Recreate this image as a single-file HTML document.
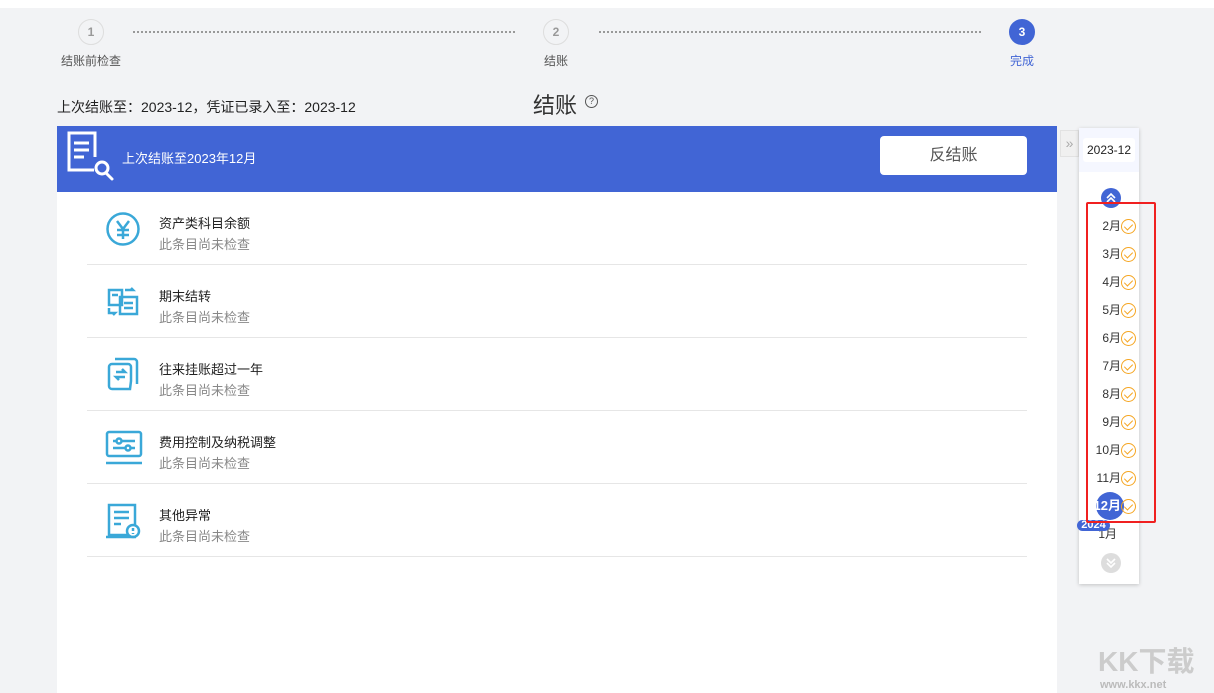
<!DOCTYPE html>
<html><head><meta charset="utf-8"><style>
*{margin:0;padding:0;box-sizing:border-box}
body{width:1214px;height:693px;background:#f2f3f5;font-family:"Liberation Sans","Noto Sans CJK SC",sans-serif;position:relative;overflow:hidden;color:#333}
.a{position:absolute}
.step{width:26px;height:26px;border-radius:50%;border:1px solid #ddd;background:#f2f3f5;color:#999;font-size:12px;font-weight:bold;text-align:center;line-height:24px}
.sl{font-size:12px;color:#555;text-align:center;width:100px}
.dash{border-top:2px dotted #999;height:0}
.row{left:87px;width:940px;height:73px;border-bottom:1px solid #e6e6e6}
.t1{position:absolute;left:72px;top:21px;font-size:13px;color:#222}
.t2{position:absolute;left:72px;top:42px;font-size:13px;color:#888}
.ic{position:absolute;left:18px;top:19px}
.m{position:absolute;right:18px;width:50px;text-align:right;font-size:12px;color:#333;line-height:16px}
.ck{position:absolute;left:1121px;width:15px;height:15px;border:1.5px solid #f5a623;border-radius:50%}
.ck:after{content:"";position:absolute;left:3.5px;top:2px;width:4px;height:7px;border:solid #f5a623;border-width:0 1.5px 1.5px 0;transform:rotate(45deg)}
</style></head><body>
<div class="a" style="left:0;top:0;width:1214px;height:8px;background:#fff"></div>
<div class="a step" style="left:78px;top:19px">1</div>
<div class="a sl" style="left:41px;top:52px">结账前检查</div>
<div class="a dash" style="left:133px;top:31px;width:382px"></div>
<div class="a step" style="left:543px;top:19px">2</div>
<div class="a sl" style="left:506px;top:52px">结账</div>
<div class="a dash" style="left:599px;top:31px;width:382px"></div>
<div class="a step" style="left:1009px;top:19px;background:#4165d5;border-color:#4165d5;color:#fff">3</div>
<div class="a sl" style="left:972px;top:52px;color:#4165d5">完成</div>
<div class="a" style="left:57px;top:97px;font-size:14px;color:#222">上次结账至：2023-12，凭证已录入至：2023-12</div>
<div class="a" style="left:533px;top:88px;font-size:22px;color:#333">结账</div>
<div class="a" style="left:585px;top:95px;width:13px;height:13px;border:1px solid #555;border-radius:50%;font-size:9px;text-align:center;line-height:11px;color:#555">?</div>
<div class="a" style="left:57px;top:126px;width:1000px;height:567px;background:#fff"></div>
<div class="a" style="left:57px;top:126px;width:1000px;height:66px;background:#4165d5"></div>
<svg class="a" style="left:64px;top:130px" width="54" height="52" viewBox="0 0 54 52" fill="none" stroke="#fff" stroke-width="3"><path d="M30 40H5V3h26v24"/><path d="M10 13h15M10 20h15M10 27h10"/><circle cx="38" cy="38" r="6"/><path d="M42 43l6 6" stroke-linecap="round"/></svg>
<div class="a" style="left:122px;top:148px;font-size:13px;color:#fff">上次结账至2023年12月</div>
<div class="a" style="left:880px;top:136px;width:147px;height:39px;background:#fff;border-radius:4px;font-size:16px;color:#555;text-align:center;line-height:39px">反结账</div>

<div class="a row" style="top:192px"><svg class="ic" width="36" height="36" viewBox="0 0 36 36" fill="none" stroke="#3aa8d8" stroke-width="2.5"><circle cx="18" cy="18" r="15.5"/><path d="M12 10l6 8 6-8M18 18v10M12 19h12M12 24h12"/></svg><div class="t1">资产类科目余额</div><div class="t2">此条目尚未检查</div></div>
<div class="a row" style="top:265px"><svg class="ic" width="36" height="36" viewBox="0 0 36 36" fill="none" stroke="#3aa8d8" stroke-width="2.5"><rect x="4" y="6" width="13" height="15"/><rect x="15" y="13" width="17" height="17"/><path d="M19 19h9M19 24h9M7 11h6M20 6h8l-2-2M4 24v5h6l-2 2"/></svg><div class="t1">期末结转</div><div class="t2">此条目尚未检查</div></div>
<div class="a row" style="top:338px"><svg class="ic" width="36" height="36" viewBox="0 0 36 36" fill="none" stroke="#3aa8d8" stroke-width="2.5"><path d="M25 32H7a3 3 0 0 1-3-3V10a3 3 0 0 1 3-3h16a3 3 0 0 1 3 3v14zM10 2h19a3 3 0 0 1 3 3v22"/><path d="M11 15h9l-3-3M20 20h-9l3 3"/></svg><div class="t1">往来挂账超过一年</div><div class="t2">此条目尚未检查</div></div>
<div class="a row" style="top:411px"><svg class="ic" width="38" height="36" viewBox="0 0 38 36" fill="none" stroke="#3aa8d8" stroke-width="2.5"><rect x="2" y="2" width="34" height="24" rx="2"/><path d="M1 33h36M8 11h22M8 18h22"/><circle cx="14" cy="11" r="2.5" fill="#fff"/><circle cx="23" cy="18" r="2.5" fill="#fff"/></svg><div class="t1">费用控制及纳税调整</div><div class="t2">此条目尚未检查</div></div>
<div class="a row" style="top:484px"><svg class="ic" width="36" height="36" viewBox="0 0 36 36" fill="none" stroke="#3aa8d8" stroke-width="2.5"><path d="M24 32H4V2h26v20"/><path d="M9 9h15M9 15h15M9 21h7"/><circle cx="28" cy="28" r="6"/><path d="M28 25v3M28 30v1"/><path d="M1 34h30"/></svg><div class="t1">其他异常</div><div class="t2">此条目尚未检查</div></div>

<div class="a" style="left:1060px;top:130px;width:19px;height:27px;background:#f0f0f0;border:1px solid #e2e2e2;color:#aaa;font-size:14px;text-align:center;line-height:24px">»</div>
<div class="a" style="left:1079px;top:128px;width:60px;height:456px;background:#fff;box-shadow:0 1px 4px rgba(0,0,0,.2)"></div>
<div class="a" style="left:1079px;top:128px;width:60px;height:44px;background:#f5f7ff"></div>
<div class="a" style="left:1083px;top:138px;width:52px;height:24px;background:#fff;border-radius:3px;font-size:12px;color:#222;text-align:center;line-height:24px">2023-12</div>
<svg class="a" style="left:1101px;top:188px" width="20" height="20" viewBox="0 0 20 20"><circle cx="10" cy="10" r="10" fill="#4165d5"/><path d="M6 10l4-4 4 4M6 14l4-4 4 4" fill="none" stroke="#fff" stroke-width="1.6"/></svg>
<div class="a" style="left:1096px;top:492px;width:28px;height:28px;border-radius:50%;background:#4165d5"></div>
<div style="position:absolute;left:1079px;top:0;width:60px;height:693px">
<div class="m" style="top:218px">2月</div><div class="m" style="top:246px">3月</div><div class="m" style="top:274px">4月</div><div class="m" style="top:302px">5月</div><div class="m" style="top:330px">6月</div><div class="m" style="top:358px">7月</div><div class="m" style="top:386px">8月</div><div class="m" style="top:414px">9月</div><div class="m" style="top:442px">10月</div><div class="m" style="top:470px">11月</div><div class="m" style="top:498px;color:#fff;font-weight:bold;font-size:13px">12月</div><div class="m" style="top:526px;right:22px">1月</div>
</div>
<div class="ck" style="top:219px"></div><div class="ck" style="top:247px"></div><div class="ck" style="top:275px"></div><div class="ck" style="top:303px"></div><div class="ck" style="top:331px"></div><div class="ck" style="top:359px"></div><div class="ck" style="top:387px"></div><div class="ck" style="top:415px"></div><div class="ck" style="top:443px"></div><div class="ck" style="top:471px"></div><div class="ck" style="top:499px"></div>
<div class="a" style="left:1077px;top:520px;width:33px;height:11px;border-radius:6px;background:#4165d5;color:#fff;font-size:11px;font-weight:bold;text-align:center;line-height:11px">2024</div>
<svg class="a" style="left:1101px;top:553px" width="20" height="20" viewBox="0 0 20 20"><circle cx="10" cy="10" r="10" fill="#ddd"/><path d="M6 6l4 4 4-4M6 10l4 4 4-4" fill="none" stroke="#fff" stroke-width="1.6"/></svg>
<div class="a" style="left:1086px;top:202px;width:70px;height:321px;border:2px solid #f02020;border-radius:2px"></div>
<div class="a" style="left:1098px;top:640px;font-size:28px;font-weight:bold;color:#ccc">KK下载</div>
<div class="a" style="left:1100px;top:679px;font-size:11px;font-weight:bold;color:#bbb">www.kkx.net</div>
</body></html>
